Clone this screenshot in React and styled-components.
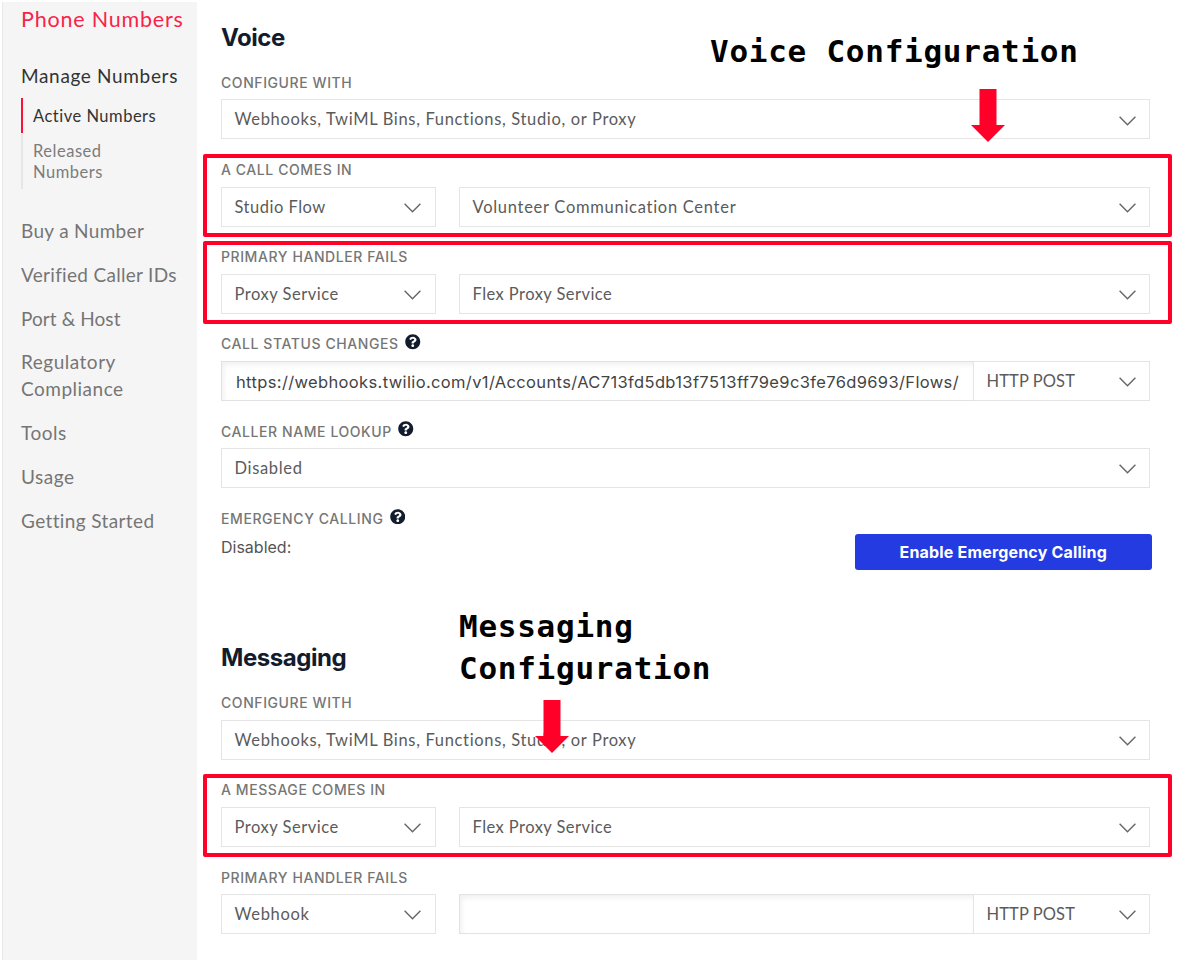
import React from "react";
import styled, { createGlobalStyle, css } from "styled-components";
import { FaQuestionCircle } from "react-icons/fa";

const Global = createGlobalStyle`
  *, *::before, *::after { box-sizing: border-box; }
  body { margin: 0; background: #fff; overflow: hidden; }
`;

const humanist = css`font-family: Lato, "Open Sans", sans-serif;`;
const grotesque = css`font-family: Inter, "Liberation Sans", sans-serif;`;

const Page = styled.div`
  display: flex;
  width: 1193px;
  height: 961px;
  padding: 2px 0 1px 2px;
  overflow: hidden;
`;

const Sidebar = styled.nav`
  ${humanist}
  width: 195px;
  flex: none;
  padding: 3px 0 0 18px;
  background: #f5f5f5;
  border-left: 1px solid #e8e8e8;
  color: #757575;
`;

const Product = styled.div`
  font-size: 21.5px;
  line-height: 28px;
  letter-spacing: 0.8px;
  color: #f9234a;
  white-space: nowrap;
`;

const NavItem = styled.div`
  font-size: 19px;
  line-height: 27px;
  letter-spacing: ${(p) => p.$spacing ?? 0.5}px;
  margin-bottom: 16.7px;
  color: ${(p) => (p.$current ? "#333" : "inherit")};
  white-space: nowrap;
`;

const Section = styled.div`
  margin-top: 28.5px;
  ${NavItem} { margin-bottom: 9.5px; }
`;

const SubList = styled.div`
  margin-bottom: 28.4px;
`;

const SubItem = styled.div`
  font-size: 16.5px;
  line-height: 21px;
  letter-spacing: ${(p) => p.$spacing}px;
  padding: 8px 0 6px 10px;
  border-left: 2px solid ${(p) => (p.$active ? "#fb1038" : "#e6e6e6")};
  color: ${(p) => (p.$active ? "#333" : "#7c7c7c")};
`;

const Main = styled.main`
  ${grotesque}
  width: 929px;
  margin-left: 24px;
  display: flex;
  flex-direction: column;
`;

const Group = styled.section`
  position: relative;
  display: flex;
  flex-direction: column;
  padding-top: ${(p) => p.$top}px;
`;

const Title = styled.h2`
  margin: 0 0 19.5px;
  font-size: 24px;
  line-height: 32px;
  font-weight: 700;
  letter-spacing: -0.45px;
  color: #121c2d;
`;

const FieldBox = styled.div`
  position: relative;
  height: 87.2px;
`;

const Highlight = styled.div`
  position: absolute;
  top: -0.7px;
  left: -18px;
  right: -22px;
  height: 83px;
  border: 4px solid #ff0028;
  border-radius: 2px;
  pointer-events: none;
`;

const Label = styled.div`
  display: flex;
  align-items: center;
  height: 31px;
  margin-bottom: 1px;
  padding-bottom: 1px;
  font-size: 14px;
  font-weight: 500;
  letter-spacing: 0.58px;
  color: #767676;
  white-space: nowrap;

  svg { margin: -4px 0 0 6.5px; color: #121c2d; }
`;

const Controls = styled.div`
  display: flex;
  height: 40px;
`;

const SelectBox = styled.div`
  ${humanist}
  display: flex;
  align-items: center;
  justify-content: space-between;
  height: 40px;
  width: ${(p) => p.$width};
  flex: ${(p) => (p.$width ? "none" : 1)};
  margin-right: ${(p) => p.$gap || 0}px;
  margin-left: ${(p) => (p.$joined ? -1 : 0)}px;
  padding: 0 ${(p) => (p.$gap ? 14.5 : 13.5)}px 0 12.5px;
  border: 1px solid #e5e5e5;
  background: #fff;
  font-size: 16.5px;
  letter-spacing: ${(p) => p.$spacing ?? 0.66}px;
  color: #5b5b5b;
  white-space: nowrap;

  svg { margin-top: 2.5px; flex: none; }
`;

const TextInput = styled.input`
  ${grotesque}
  flex: 1;
  min-width: 0;
  height: 40px;
  padding: 3px 14px 0;
  border: 1px solid #e2e2e2;
  border-radius: 0;
  outline: none;
  background: #fff;
  box-shadow: inset 2px 3px 5px rgba(0, 0, 0, 0.06);
  font-size: 16.5px;
  letter-spacing: 0.36px;
  color: #444;
`;

const Emergency = styled.div`
  display: flex;
  justify-content: space-between;
  margin-top: -1px;
  margin-right: -1.5px;
`;

const Status = styled.div`
  font-size: 16px;
  line-height: 24px;
  margin-top: 1px;
  color: #555;
`;

const Button = styled.button`
  ${grotesque}
  width: 296.5px;
  height: 36px;
  padding: 0;
  border: 0;
  border-radius: 3px;
  background: #243be2;
  color: #fff;
  font-size: 16px;
  font-weight: 700;
  letter-spacing: 0.18px;
`;

const Callout = styled.div`
  position: absolute;
  top: ${(p) => p.$top}px;
  left: ${(p) => p.$left}px;
  display: flex;
  flex-direction: column;
  font-family: "DejaVu Sans Mono", monospace;
  font-size: 31px;
  line-height: 42px;
  font-weight: 700;
  letter-spacing: 0.74px;
  color: #000;
  white-space: pre;

  svg { margin: ${(p) => p.$arrowGap}px 0 0 ${(p) => p.$arrowLeft}px; }
`;

const Chevron = () => (
  <svg width="17" height="10" viewBox="0 0 17 10" fill="none" stroke="#666" strokeWidth="1.4">
    <path d="M0.6 0.7 8.5 8.8 16.4 0.7" />
  </svg>
);

const Arrow = () => (
  <svg width="34" height="53" viewBox="0 0 34 53">
    <path fill="#ff0028" d="M8.5 0h17v36H34L17 53 0 36h8.5z" />
  </svg>
);

const Select = ({ children, ...rest }) => (
  <SelectBox {...rest}>
    <span>{children}</span>
    <Chevron />
  </SelectBox>
);

const Field = ({ label, help, highlight, children }) => (
  <FieldBox>
    <Label>
      {label}
      {help && <FaQuestionCircle size={15.5} />}
    </Label>
    <Controls>{children}</Controls>
    {highlight && <Highlight />}
  </FieldBox>
);

const FieldRows = styled.div`
  margin-top: -5.6px;
`;

export default function App() {
  return (
    <>
      <Global />
      <Page>
        <Sidebar>
          <Product>Phone Numbers</Product>
          <Section>
            <NavItem $current $spacing={0.66}>Manage Numbers</NavItem>
            <SubList>
              <SubItem $active $spacing={0.5}>Active Numbers</SubItem>
              <SubItem $spacing={0.52}>Released<br />Numbers</SubItem>
            </SubList>
          </Section>
          <NavItem $spacing={0.32}>Buy a Number</NavItem>
          <NavItem $spacing={0.3}>Verified Caller IDs</NavItem>
          <NavItem $spacing={0.08}>Port &amp; Host</NavItem>
          <NavItem>Regulatory<br />Compliance</NavItem>
          <NavItem>Tools</NavItem>
          <NavItem>Usage</NavItem>
          <NavItem $spacing={0.38}>Getting Started</NavItem>
        </Sidebar>
        <Main>
          <Group $top={19.5}>
            <Title>Voice</Title>
            <FieldRows>
              <Field label="CONFIGURE WITH">
                <Select>Webhooks, TwiML Bins, Functions, Studio, or Proxy</Select>
              </Field>
              <Field label="A CALL COMES IN" highlight>
                <Select $width="215px" $gap={23} $spacing={0.5}>Studio Flow</Select>
                <Select $spacing={0.72}>Volunteer Communication Center</Select>
              </Field>
              <Field label="PRIMARY HANDLER FAILS" highlight>
                <Select $width="215px" $gap={23} $spacing={0.52}>Proxy Service</Select>
                <Select $spacing={0.45}>Flex Proxy Service</Select>
              </Field>
              <Field label="CALL STATUS CHANGES" help>
                <TextInput readOnly value="https://webhooks.twilio.com/v1/Accounts/AC713fd5db13f7513ff79e9c3fe76d9693/Flows/" />
                <Select $width="177px" $joined $spacing={0.1}>HTTP POST</Select>
              </Field>
              <Field label="CALLER NAME LOOKUP" help>
                <Select>Disabled</Select>
              </Field>
            </FieldRows>
            <Label>
              EMERGENCY CALLING
              <FaQuestionCircle size={15.5} />
            </Label>
            <Emergency>
              <Status>Disabled:</Status>
              <Button>Enable Emergency Calling</Button>
            </Emergency>
            <Callout $top={27.5} $left={489} $arrowGap={17} $arrowLeft={261}>
              Voice Configuration
              <Arrow />
            </Callout>
          </Group>
          <Group $top={71.5}>
            <Title>Messaging</Title>
            <FieldRows>
              <Field label="CONFIGURE WITH">
                <Select>Webhooks, TwiML Bins, Functions, Studio, or Proxy</Select>
              </Field>
              <Field label="A MESSAGE COMES IN" highlight>
                <Select $width="215px" $gap={23} $spacing={0.52}>Proxy Service</Select>
                <Select $spacing={0.45}>Flex Proxy Service</Select>
              </Field>
              <Field label="PRIMARY HANDLER FAILS">
                <Select $width="215px" $gap={23}>Webhook</Select>
                <TextInput readOnly value="" aria-label="Handler URL" />
                <Select $width="177px" $joined $spacing={0.1}>HTTP POST</Select>
              </Field>
            </FieldRows>
            <Callout $top={35} $left={238} $arrowGap={11} $arrowLeft={76}>
              {"Messaging\nConfiguration"}
              <Arrow />
            </Callout>
          </Group>
        </Main>
      </Page>
    </>
  );
}
